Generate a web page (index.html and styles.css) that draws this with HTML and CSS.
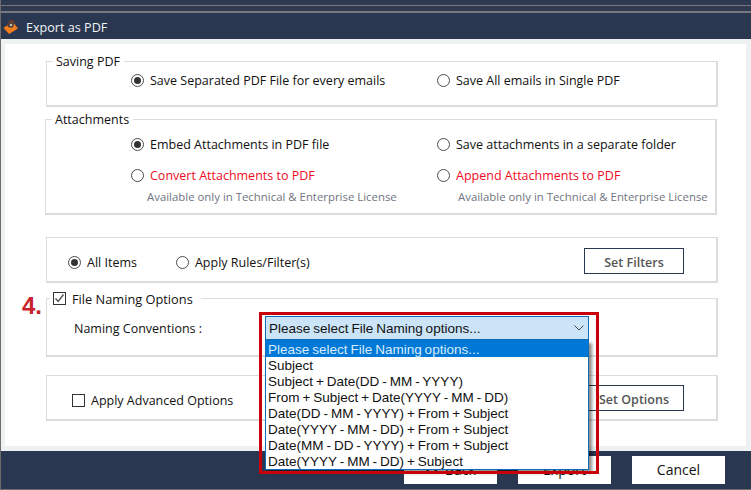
FILE: index.html
```html
<!DOCTYPE html>
<html>
<head>
<title>Export as PDF</title>
<meta http-equiv="Content-Type" content="text/html; charset=utf-8" />
<link rel="stylesheet" href="styles.css">
</head>
<body>
<div class="window">
	<div class="chrome"></div>
	<div class="titlebar">
		<svg class="appicon" width="16" height="16" viewBox="0 0 16 16">
			<path d="M0.500 9 L9.500 2.500 L15 9.500 L6 15 Z" fill="#f07d1e"/>
			<path d="M4 6.500 L6 2 L9.500 1 L11.500 4 L6 8.500 Z" fill="#7a3f20"/>
			<circle cx="8" cy="6" r="2.700" fill="#3a3f4a"/>
			<circle cx="8" cy="6" r="1.200" fill="#d9c2ad"/>
		</svg>
		<span>Export as PDF</span>
	</div>
	<div class="content">
		<div class="panel">
			<div class="group group-saving">
				<div class="legend">Saving PDF</div>
				<div class="optrow">
					<div class="opt"><i class="radio on"></i>Save Separated PDF File for every emails</div>
					<div class="opt"><i class="radio"></i>Save All emails in Single PDF</div>
				</div>
			</div>
			<div class="group group-attach">
				<div class="legend">Attachments</div>
				<div class="optrow">
					<div class="opt"><i class="radio on"></i>Embed Attachments in PDF file</div>
					<div class="opt"><i class="radio"></i>Save attachments in a separate folder</div>
				</div>
				<div class="optrow second">
					<div class="opt red"><i class="radio"></i>Convert Attachments to PDF<div class="note">Available only in Technical &amp; Enterprise License</div></div>
					<div class="opt red"><i class="radio"></i>Append Attachments to PDF<div class="note note-right">Available only in Technical &amp; Enterprise License</div></div>
				</div>
			</div>
			<div class="group group-filter">
				<div class="opt"><i class="radio on"></i>All Items</div>
				<div class="opt rules"><i class="radio"></i>Apply Rules/Filter(s)</div>
				<div class="btn">Set Filters</div>
			</div>
			<div class="group group-naming">
				<div class="legend legend-check"><i class="check on"><svg width="13" height="13" viewBox="0 0 13 13"><path d="M2.500 6.500 L5.200 9.500 L10.500 2.500" fill="none" stroke="#555" stroke-width="1.400"/></svg></i>File Naming Options</div>
				<div class="numeral">4.</div>
				<div class="naming-row">
					<span class="naming-label">Naming Conventions :</span>
					<div class="select">
						<div class="select-head">Please select File Naming options...<svg width="10" height="6" viewBox="0 0 10 6"><path d="M0.500 0.500 L5 5 L9.500 0.500" fill="none" stroke="#444" stroke-width="1"/></svg></div>
						<div class="select-list">
							<div class="item sel">Please select File Naming options...</div>
							<div class="item">Subject</div>
							<div class="item">Subject + Date(DD - MM - YYYY)</div>
							<div class="item">From + Subject + Date(YYYY - MM - DD)</div>
							<div class="item">Date(DD - MM - YYYY) + From + Subject</div>
							<div class="item">Date(YYYY - MM - DD) + From + Subject</div>
							<div class="item">Date(MM - DD - YYYY) + From + Subject</div>
							<div class="item">Date(YYYY - MM - DD) + Subject</div>
						</div>
						<div class="redbox"></div>
					</div>
				</div>
			</div>
			<div class="group group-advanced">
				<div class="opt"><i class="check"></i>Apply Advanced Options</div>
				<div class="btn btn-options">Set Options</div>
			</div>
		</div>
	</div>
	<div class="footer">
		<div class="fbtn">&lt;&lt; Back</div>
		<div class="fbtn">Export</div>
		<div class="fbtn">Cancel</div>
	</div>
</div>
</body>
</html>
```

FILE: styles.css
```css
html, body {
	margin: 0;
	padding: 0;
}
body {
	width: 751px;
	height: 490px;
	overflow: hidden;
	background-color: #6d6d6d;
	font-family: "Open Sans", sans-serif;
	font-size: 12.5px;
	color: #111;
}
.window {
	height: 489px;
	margin-left: 1px;
	display: flex;
	flex-direction: column;
	background-color: #2a3750;
}
.chrome {
	height: 12px;
	margin-top: 1px;
	box-sizing: border-box;
	background: linear-gradient(#2f3a50 4px, #77797f 4px, #77797f 5px, #2f3a50 5px, #2f3a50 10px, #77797f 10px);
}
.titlebar {
	height: 26px;
	display: flex;
	align-items: center;
	gap: 7px;
	padding-left: 2px;
	padding-top: 2px;
	box-sizing: border-box;
	color: #f2f4f7;
	font-size: 12.6px;
}
.appicon {
	display: block;
}
.content {
	height: 412px;
	box-sizing: border-box;
	padding: 5px 5px 5px 4px;
	background-color: #eef1f2;
}
.panel {
	height: 402px;
	box-sizing: border-box;
	padding: 17px 28px 0 41px;
	background-color: #fff;
}
.group {
	position: relative;
	border: solid #dcdcdc 2px;
	border-width: 1px 2px 2px 1px;
	box-sizing: border-box;
}
.legend {
	position: absolute;
	top: -9px;
	left: 6px;
	padding: 0 4px 0 3px;
	background-color: #fff;
	line-height: 18px;
}
.group-saving {
	height: 46px;
	padding: 10px 0 0 84px;
}
.group-attach {
	height: 96px;
	margin-top: 12px;
	margin-left: -1px;
	margin-right: 1px;
	padding: 16px 0 0 85px;
}
.group-filter {
	height: 46px;
	margin-top: 22px;
	padding: 7px 0 0 21px;
	display: flex;
	align-items: center;
}
.group-naming {
	height: 59px;
	margin-top: 15px;
}
.group-advanced {
	height: 46px;
	margin-top: 18px;
	padding: 7px 0 0 25px;
	display: flex;
	align-items: center;
}
.optrow {
	display: flex;
}
.optrow .opt {
	flex: none;
	width: 287px;
}
.second {
	margin-top: 13px;
}
.opt {
	position: relative;
	line-height: 18px;
	padding-left: 19px;
}
.rules {
	margin-left: 39px;
}
.red {
	color: #f00c1f;
}
.note {
	color: #6f7480;
	font-size: 11.4px;
	margin-top: 3px;
	margin-left: -3px;
	white-space: nowrap;
}
.note-right {
	margin-left: 2px;
}
.radio {
	position: absolute;
	left: 0;
	top: 2px;
	width: 13px;
	height: 13px;
	box-sizing: border-box;
	border: solid #4d4d4d 1px;
	border-radius: 50%;
	background-color: #fff;
}
.radio.on:after {
	content: '';
	position: absolute;
	left: 2px;
	top: 2px;
	width: 7px;
	height: 7px;
	border-radius: 50%;
	background-color: #333;
}
.check {
	position: absolute;
	left: 0;
	top: 2px;
	width: 13px;
	height: 13px;
	box-sizing: border-box;
	border: solid #333 1px;
	background-color: #fff;
}
.check svg {
	position: absolute;
	left: -1px;
	top: -1px;
}
.legend-check {
	left: 3px;
	padding-left: 22px;
	padding-right: 8px;
	font-size: 12.8px;
}
.legend-check .check {
	left: 3px;
}
.numeral {
	position: absolute;
	left: -25px;
	top: -6px;
	color: #c8232c;
	font-family: "Liberation Sans", sans-serif;
	font-size: 24px;
	font-weight: bold;
	line-height: 26px;
}
.btn {
	position: absolute;
	left: 537px;
	top: 10px;
	width: 100px;
	height: 26px;
	box-sizing: border-box;
	border: solid #2a3750 1px;
	background-color: #fff;
	color: #555;
	font-weight: 600;
	font-size: 12.5px;
	text-align: center;
	line-height: 27px;
}
.btn-options {
	top: 9px;
}
.naming-row {
	display: flex;
	padding: 17px 0 0 27px;
}
.naming-label {
	width: 191px;
	padding-top: 4px;
	line-height: 18px;
}
.select {
	position: relative;
	width: 324px;
	font-family: "Liberation Sans", sans-serif;
	font-size: 13.5px;
	word-spacing: -0.8px;
	color: #111;
	z-index: 5;
}
.select-head {
	height: 24px;
	box-sizing: border-box;
	display: flex;
	align-items: center;
	justify-content: space-between;
	padding: 0 4px 0 3px;
	border: solid #0f6cb5 1px;
	background-color: #cce4f7;
}
.select-list {
	position: absolute;
	left: 0;
	right: 0;
	top: 24px;
	box-sizing: border-box;
	height: 130px;
	border: solid #0f6cb5 1px;
	border-top: none;
	background-color: #fff;
	box-shadow: 3px 3px 3px rgba(0, 0, 0, 0.45);
}
.item {
	height: 16px;
	line-height: 18px;
	padding-left: 2px;
	white-space: nowrap;
}
.sel {
	height: 17px;
	line-height: 19px;
	background-color: #0078d7;
	color: #d8ecfb;
}
.redbox {
	position: absolute;
	left: -6px;
	top: -4px;
	width: 340px;
	height: 162px;
	box-sizing: border-box;
	border: solid #c8000a 3px;
	pointer-events: none;
}
.footer {
	flex: 1;
	display: flex;
	gap: 21px;
	padding: 5px 0 0 403px;
}
.fbtn {
	width: 93px;
	height: 28px;
	background-color: #fff;
	color: #111;
	font-size: 14px;
	text-align: center;
	line-height: 28px;
}
```
